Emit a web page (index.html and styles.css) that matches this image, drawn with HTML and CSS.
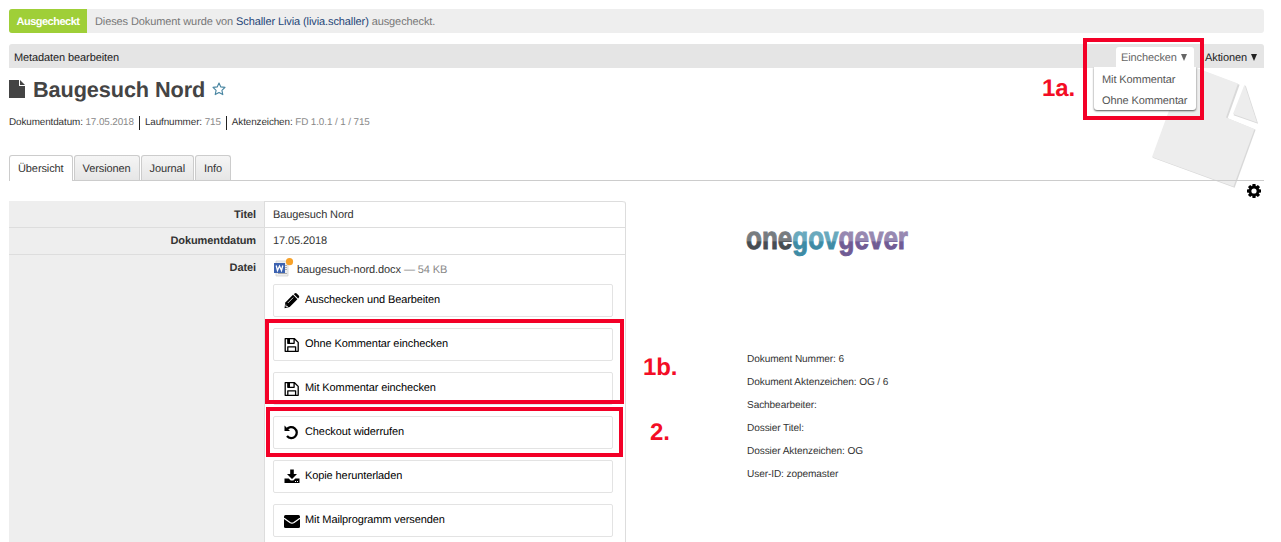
FILE: index.html
```html
<!DOCTYPE html>
<html lang="de">
<head>
<meta charset="utf-8">
<title>Baugesuch Nord</title>
<link rel="stylesheet" href="styles.css">
</head>
<body>
<svg class="backdrop" width="110" height="130" viewBox="1150 60 110 130">
  <g fill="#d9d9d9" transform="translate(.6 .8)"><path d="M1186 64 1239 84 1227 117.500 1255 129 1234 187 1152 157Z"/><path d="M1245 84.500 1257.500 123 1233 114.500Z"/></g>
  <g fill="#ededed"><path d="M1186 64 1238 83.500 1226 117.500 1254.500 129 1233.500 186.500 1152 157Z"/><path d="M1244.500 84.500 1257 122.500 1233 114Z"/></g>
</svg>
<div class="page">
  <div class="status"><b class="badge">Ausgecheckt</b><span class="status-text">Dieses Dokument wurde von <a>Schaller Livia (livia.schaller)</a> ausgecheckt.</span></div>
  <div class="toolbar">
    <span class="edit">Metadaten bearbeiten</span>
    <div class="checkin">Einchecken <i class="arrow"></i>
      <div class="menu"><span>Mit Kommentar</span><span>Ohne Kommentar</span></div>
    </div>
    <span class="actions">Aktionen <i class="arrow"></i></span>
  </div>
  <div class="heading">
    <svg width="16" height="19" viewBox="0 0 16 19"><path fill="#444" d="M0 0H10V6H16V18H0Z"/><path fill="#444" d="M11 0 16 5H11Z"/></svg>
    <h1>Baugesuch Nord</h1>
    <svg class="star" width="14" height="14" viewBox="0 0 14 14"><path fill="none" stroke="#4684a0" stroke-width="1.100" stroke-linejoin="round" d="M7 1 8.800 4.900 13 5.400 9.900 8.300 10.800 12.600 7 10.500 3.200 12.600 4.100 8.300 1 5.400 5.200 4.900Z"/></svg>
  </div>
  <div class="meta"><span>Dokumentdatum: <em>17.05.2018</em></span><span>Laufnummer: <em>715</em></span><span>Aktenzeichen: <em>FD 1.0.1 / 1 / 715</em></span></div>
  <div class="tabs"><span class="tab active">Übersicht</span><span class="tab">Versionen</span><span class="tab">Journal</span><span class="tab">Info</span></div>
  <div class="gear"><svg width="14" height="14" viewBox="0 0 14 14"><g fill="#000"><circle cx="7" cy="7" r="5"/><path id="t" d="M5.500 0h3l.4 3h-3.800zM5.500 14h3l.4-3h-3.800z"/><use href="#t" transform="rotate(45 7 7)"/><use href="#t" transform="rotate(90 7 7)"/><use href="#t" transform="rotate(135 7 7)"/></g><circle cx="7" cy="7" r="2.600" fill="#fff"/></svg></div>
  <div class="content">
    <div class="listing">
      <div class="row"><b class="label">Titel</b><div class="value">Baugesuch Nord</div></div>
      <div class="row second"><b class="label">Dokumentdatum</b><div class="value">17.05.2018</div></div>
      <div class="row file-row"><b class="label">Datei</b>
        <div class="value">
          <div class="file">
            <svg width="21" height="19" viewBox="0 0 21 19"><path fill="#eee" stroke="#ccc" stroke-width=".7" d="M3 3h12v15H3z"/><path stroke="#aaa" d="M11 7.500h3M11 9.500h3M11 11.500h3M5 15.500h9"/><path fill="#3c62b0" d="M1 5h11v10H1z"/><path fill="none" stroke="#fff" stroke-width="1.300" d="m3.200 7.500 1.300 5 2-4.500 2 4.500 1.300-5"/><circle cx="16.500" cy="3.700" r="3.600" fill="#f7a128"/></svg>
            <span>baugesuch-nord.docx</span><em>— 54 KB</em>
          </div>
          <div class="buttons">
            <div class="btn"><svg width="16" height="16" viewBox="0 0 16 16"><path d="M1.300 9.500 9 1.800 13.400 6.200 5.700 13.900 .5 15.200Z"/><path d="M9.700 1.100 10.700.4q1.100-.7 2 .2l2 2q.9.900.2 2l-.8 1z"/><path fill="none" stroke="#fff" stroke-width=".8" d="M3.800 10 9.200 4.600M1.900 11.500v2.100h2.100"/></svg><span>Auschecken und Bearbeiten</span></div>
            <div class="btn"><svg width="16" height="16" viewBox="0 0 16 16"><path fill="none" stroke="#000" stroke-width="1.300" stroke-linejoin="round" d="M1.200 1.700h9.300l3.700 3.700v8.900H1.200zM3.800 14V9.800h7.800V14M3.800 2v4.300h6.300V2"/><path d="M4 2h2v4H4z"/></svg><span>Ohne Kommentar einchecken</span></div>
            <div class="btn"><svg width="16" height="16" viewBox="0 0 16 16"><path fill="none" stroke="#000" stroke-width="1.300" stroke-linejoin="round" d="M1.200 1.700h9.300l3.700 3.700v8.900H1.200zM3.800 14V9.800h7.800V14M3.800 2v4.300h6.300V2"/><path d="M4 2h2v4H4z"/></svg><span>Mit Kommentar einchecken</span></div>
            <div class="btn"><svg width="16" height="16" viewBox="0 0 16 16"><path fill="none" stroke="#000" stroke-width="2.300" d="M2.600 4.700A5.500 5.500 0 1 1 3 11.100"/><path d="M.5 .5 6 6H.5z"/></svg><span>Checkout widerrufen</span></div>
            <div class="btn"><svg width="16" height="16" viewBox="0 0 16 16"><path d="M6.200 .5h3.600v4.500h3.200L8 10 3 5h3.200z"/><path d="M.5 9.500h4.200l2 2h2.600l2-2h4.200v4.500H.5z"/><path fill="#fff" d="M11 12h1v1h-1zM13 12h1v1h-1z"/></svg><span>Kopie herunterladen</span></div>
            <div class="btn"><svg width="16" height="16" viewBox="0 0 16 16"><rect x="0" y="2" width="16" height="13" rx="1.500"/><path fill="none" stroke="#fff" stroke-width="1.300" d="M0 5.200 6 9.500q2 1.300 4 0L16 5.200"/></svg><span>Mit Mailprogramm versenden</span></div>
          </div>
        </div>
      </div>
    </div>
    <div class="preview">
      <svg class="logo" width="164" height="36" viewBox="0 0 164 36">
        <defs>
          <linearGradient id="g1" x1="0" y1="0" x2="0" y2="36" gradientUnits="userSpaceOnUse"><stop offset=".46" stop-color="#777c80"/><stop offset=".5" stop-color="#454d53"/></linearGradient>
          <linearGradient id="g2" x1="0" y1="0" x2="0" y2="36" gradientUnits="userSpaceOnUse"><stop offset=".46" stop-color="#69a9bd"/><stop offset=".5" stop-color="#3e8ba5"/></linearGradient>
          <linearGradient id="g3" x1="0" y1="0" x2="0" y2="36" gradientUnits="userSpaceOnUse"><stop offset=".46" stop-color="#9788b1"/><stop offset=".5" stop-color="#705b94"/></linearGradient>
        </defs>
        <text x="0" y="25" textLength="162" lengthAdjust="spacingAndGlyphs"><tspan fill="url(#g1)" stroke="url(#g1)">one</tspan><tspan fill="url(#g2)" stroke="url(#g2)">gov</tspan><tspan fill="url(#g3)" stroke="url(#g3)">gever</tspan></text>
      </svg>
      <div class="facts"><span>Dokument Nummer: 6</span><span>Dokument Aktenzeichen: OG / 6</span><span>Sachbearbeiter:</span><span>Dossier Titel:</span><span>Dossier Aktenzeichen: OG</span><span>User-ID: zopemaster</span></div>
    </div>
  </div>
</div>
<div class="mark mark-1a"></div><div class="mark mark-1b"></div><div class="mark mark-2"></div>
<b class="note note-1a">1a.</b><b class="note note-1b">1b.</b><b class="note note-2">2.</b>
</body>
</html>
```
FILE: styles.css
```css
* { box-sizing: border-box; }
body { margin: 0; width: 1281px; height: 542px; overflow: hidden; position: relative; background: #fff; color: #333; font: 11px/14px "Liberation Sans", Arial, sans-serif; letter-spacing: -.1px; text-rendering: geometricPrecision; white-space: nowrap; }
em { font-style: normal; color: #888; }
svg { display: block; flex: none; }
.backdrop { position: absolute; left: 1150px; top: 60px; }
.page { position: relative; padding: 9px 17px 0 9px; }
.status { display: flex; height: 24px; border-radius: 3px; background: #eee; overflow: hidden; color: #777; line-height: 26px; }
.badge { width: 78px; text-align: center; background: #9fcf38; color: #fff; letter-spacing: -.5px; }
.status-text { padding-left: 8px; }
.status a { color: #1f4678; }
.toolbar { display: flex; height: 24px; margin-top: 11px; padding-left: 5px; border-radius: 3px 3px 0 0; background: #e5e5e5; line-height: 28px; color: #222; }
.edit { flex: 1; }
.arrow { display: inline-block; margin-left: 1px; border: solid transparent; border-width: 7px 3.5px 0; border-top-color: currentColor; }
.checkin { position: relative; width: 78px; height: 21px; margin-top: 3px; padding-left: 5px; line-height: 22px; background: #fff; border-radius: 3px 3px 0 0; color: #666; }
.menu { position: absolute; top: 20px; right: -2px; width: 102px; height: 43px; padding: 3px 0 0 8px; display: flex; flex-direction: column; background: #fff; border-radius: 0 0 3px 3px; box-shadow: 0 1px 2px #555; clip-path: inset(0 -4px -4px -4px); line-height: 21px; color: #555; }
.actions { width: 70px; padding-left: 11px; }
.heading { display: flex; height: 25px; margin-top: 9px; padding-top: 3px; }
.heading h1 { margin: -3px 0 0 8px; font-size: 21.7px; line-height: 25px; color: #444; }
.star { margin: 2px 0 0 7px; }
.meta { display: flex; margin-top: 14px; font-size: 9.9px; line-height: 14px; }
.meta span + span { margin-left: 5px; padding-left: 5px; border-left: 1px solid #222; }
.tabs { display: flex; gap: 1px; height: 26px; margin-top: 25px; border-bottom: 1px solid #ccc; }
.tab { height: 25px; padding: 0 8px; border: 1px solid #ccc; border-bottom: 0; border-radius: 3px 3px 0 0; background: linear-gradient(#f5f5f5, #e6e6e6); line-height: 26px; }
.tab.active { height: 26px; background: #fff; }
.gear { display: flex; justify-content: flex-end; height: 20px; padding: 3px 3px 0; }
.content { display: flex; }
.listing { width: 617px; height: 360px; border-right: 1px solid #ddd; border-radius: 0 3px 0 0; }
.row { display: flex; height: 26px; }
.row.second { height: 27px; }
.row.file-row { height: 307px; }
.label { width: 255px; padding: 7px 8px 0 0; text-align: right; background: #eee; }
.row + .row .label, .value { border-top: 1px solid #ddd; }
.value { flex: 1; padding: 6px 12px 0 8px; border-left: 1px solid #ddd; }
.row:first-child .value { border-radius: 0 3px 0 0; }
.row + .row .label { padding-top: 6px; }
.file { display: flex; height: 19px; gap: 3px; margin-top: -3px; line-height: 24px; }
.buttons { display: flex; flex-direction: column; gap: 11px; margin-top: 7px; }
.btn { display: flex; gap: 5px; height: 33px; padding: 7px 0 0 10px; border: 1px solid #e3e3e3; border-radius: 2px; color: #000; line-height: 16px; }
.btn svg { margin-top: 1px; }
.preview { margin-left: 120px; padding-top: 23px; }
.logo { overflow: visible; }
.logo text { font: bold 32px "Liberation Sans", Arial, sans-serif; letter-spacing: 0; stroke-width: 1px; }
.facts { display: flex; flex-direction: column; margin: 88px 0 0 1px; font-size: 10.1px; line-height: 23.1px; }
.mark { position: absolute; border: 4px solid #f30027; }
.mark-1a { left: 1083px; top: 38px; width: 121px; height: 82px; }
.mark-1b { left: 265px; top: 319px; width: 359px; height: 85px; }
.mark-2 { left: 266px; top: 407px; width: 357px; height: 50px; }
.note { position: absolute; color: #f30d25; font-size: 24px; line-height: 28px; }
.note-1a { left: 1042px; top: 75px; }
.note-1b { left: 643px; top: 354px; }
.note-2 { left: 650px; top: 419px; }
```
